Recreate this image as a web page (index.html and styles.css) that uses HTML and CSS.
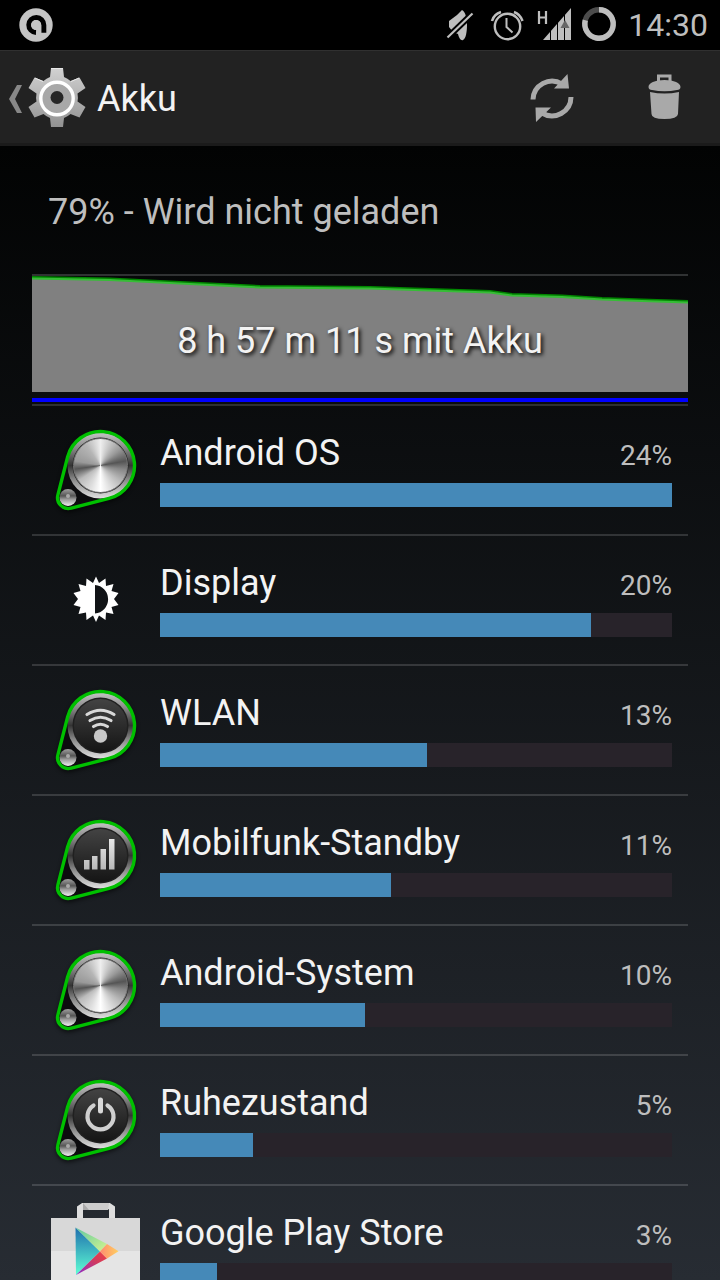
FILE: index.html
```
<!DOCTYPE html>
<html lang="de">
<head>
<meta charset="utf-8">
<meta name="viewport" content="width=device-width, initial-scale=1">
<title>Akku</title>
<link rel="stylesheet" href="styles.css">
</head>
<body>
<svg class="defs" width="0" height="0" aria-hidden="true">
  <defs>
    <linearGradient id="gear" x1="0" y1="0" x2="0" y2="1"><stop offset="0" stop-color="#d2d2d2"/><stop offset="1" stop-color="#929292"/></linearGradient>
    <linearGradient id="rim" x1="0" y1="0" x2="0" y2="1"><stop offset="0" stop-color="#c4c4c4"/><stop offset=".25" stop-color="#858585"/><stop offset=".5" stop-color="#343434"/><stop offset=".7" stop-color="#858585"/><stop offset="1" stop-color="#e0e0e0"/></linearGradient>
    <linearGradient id="face" x1="0" y1="0" x2="0" y2="1"><stop offset="0" stop-color="#434343"/><stop offset="1" stop-color="#151515"/></linearGradient>
    <linearGradient id="glyph" x1="0" y1="0" x2="0" y2="1"><stop offset="0" stop-color="#e8e8e8"/><stop offset="1" stop-color="#b8b8b8"/></linearGradient>
    <linearGradient id="ball" x1="0" y1="0" x2="0" y2="1"><stop offset="0" stop-color="#a0a0a0"/><stop offset=".4" stop-color="#555"/><stop offset=".6" stop-color="#999"/><stop offset="1" stop-color="#eee"/></linearGradient>
    <linearGradient id="play-blue" x1="0" y1="0" x2="0" y2="1"><stop offset="0" stop-color="#1f6fae"/><stop offset="1" stop-color="#5fffd4"/></linearGradient>
    <linearGradient id="play-green" x1="0" y1="0" x2="1" y2="1"><stop offset="0" stop-color="#5fc8a0"/><stop offset="1" stop-color="#d4f590"/></linearGradient>
    <linearGradient id="play-red" x1="0" y1="1" x2="1" y2="0"><stop offset="0" stop-color="#8a2bd0"/><stop offset=".6" stop-color="#d03a60"/><stop offset="1" stop-color="#f04040"/></linearGradient>
    <linearGradient id="play-orange" x1="0" y1="0" x2="1" y2="0"><stop offset="0" stop-color="#ff8a70"/><stop offset="1" stop-color="#ffd060"/></linearGradient>
    <filter id="soft" x="-20%" y="-20%" width="140%" height="140%"><feGaussianBlur stdDeviation="2"/></filter>
    <g id="knob">
      <path d="M27.6 42A34 34 0 1 1 69 83.4L31.3 93.2A11 11 0 0 1 17.9 79.8Z" fill="#000" stroke="#000" stroke-width="3" opacity=".6" transform="translate(0 2)" filter="url(#soft)"/>
      <path d="M27.6 42A34 34 0 1 1 69 83.4L31.3 93.2A11 11 0 0 1 17.9 79.8Z" fill="#0c0c0e"/>
      <circle cx="60.5" cy="50.5" r="33" fill="url(#rim)"/>
      <circle cx="60.5" cy="50.5" r="28" fill="#202020"/>
      <circle cx="60.5" cy="50.5" r="26.5" fill="url(#face)"/>
      <circle cx="28" cy="82.5" r="8.5" fill="url(#ball)"/>
      <circle cx="28" cy="81" r="2" fill="#aaa"/>
      <path d="M27.6 42A34 34 0 1 1 69 83.4L31.3 93.2A11 11 0 0 1 17.9 79.8Z" fill="none" stroke="#00c000" stroke-width="3.4"/>
    </g>
  </defs>
</svg>

<header class="status">
  <svg class="notice" viewBox="0 0 34 34" aria-hidden="true">
    <circle cx="17" cy="17" r="16.7" fill="#c4c4c4"/>
    <path d="M17 24.5A7.5 7.500 0 1 1 24.800 17V24.700" fill="none" stroke="#000" stroke-width="5"/>
    <circle cx="17" cy="17" r="5" fill="#c4c4c4"/>
    <path d="M19 17h3.200v8h-3.200z" fill="#c4c4c4"/>
  </svg>
  <svg class="signals" viewBox="446 0 172 50" aria-hidden="true">
    <g fill="#bebebe">
      <path d="M449 21L457 15L462 10C466 12 467 20 467 25C467 31 466 39 463 40C461 41 459 38 458 34L453 32L449 27Z"/>
      <path d="M447 38L473 13" stroke="#000" stroke-width="6"/>
      <path d="M447.500 37.500L472.500 13.500" stroke="#bebebe" stroke-width="2.200"/>
      <path d="M543 40L571 8V40Z"/>
    </g>
    <g fill="none" stroke="#bebebe">
      <circle cx="507.500" cy="26.500" r="12.700" stroke-width="2.400"/>
      <path d="M506.500 18V27L512.500 32.500" stroke-width="2"/>
      <path d="M492 21Q494 14 501 12M514 12Q520 14 522.500 21" stroke-width="2.600"/>
      <path d="M539 11V24M546 11V24M539 17.500H546" stroke-width="2.200"/>
      <circle cx="599" cy="24" r="14.200" stroke="#4c4c4c" stroke-width="5.400"/>
      <path d="M599 9.800A14.200 14.200 0 1 1 585.300 20.300" stroke-width="5.400"/>
    </g>
    <path d="M550.500 24V41M557.500 18V41M564.500 8V41" stroke="#000" stroke-width="1"/>
    <path d="M560.500 28L565 20L569.500 28Z" fill="#666"/>
  </svg>
  <time class="clock">14:30</time>
</header>

<nav class="bar">
  <a class="up" href="#">
    <svg class="logo" viewBox="0 0 90 88" aria-hidden="true">
      <path d="M17 30H22L15 44L22 58H17L9 44Z" fill="#888"/>
      <g transform="translate(57 42.500)">
        <path fill="url(#gear)" d="M-6-29.500H6L7-20.500A21.500 21.500 0 0 1 13.500-16.500L22.500-20L28.500-9.500L20.500-4A21.500 21.500 0 0 1 20.500 4L28.500 9.500L22.500 20L13.500 16.500A21.500 21.500 0 0 1 7 20.500L6 29.500H-6L-7 20.500A21.500 21.500 0 0 1 -13.500 16.500L-22.500 20L-28.500 9.500L-20.500 4A21.500 21.500 0 0 1 -20.500-4L-28.500-9.500L-22.500-20L-13.500-16.500A21.500 21.500 0 0 1 -7-20.500Z"/>
        <path d="M-6-29H6M-22-19.500L-14-16M22-19.500L14-16" stroke="#e8e8e8"/>
        <circle r="16.200" cy="1" fill="#a8a8a8" stroke="#fff" stroke-width="3.400"/>
        <circle r="6.500" fill="#262626"/>
      </g>
    </svg>
    <span class="title">Akku</span>
  </a>
  <button class="action" aria-label="Aktualisieren">
    <svg viewBox="0 0 48 52" aria-hidden="true">
      <path d="M5 26.500A19 19 0 0 1 34 11M43 24A19 19 0 0 1 14 40" fill="none" stroke="#a9a9a9" stroke-width="5"/>
      <path d="M39.500 1L41 15.500H26ZM8 49L7.500 34.500H23Z" fill="#a9a9a9"/>
    </svg>
  </button>
  <button class="action" aria-label="Löschen">
    <svg viewBox="0 0 48 52" aria-hidden="true">
      <path d="M18.500 9V3H30V9" fill="none" stroke="#a9a9a9" stroke-width="3"/>
      <path d="M8.500 14C8.500 10 15 7 24.500 7S40.500 10 40.500 14C40.500 16 39 17 37 17Q24.500 19.500 12 17C10 17 8.500 16 8.500 14ZM10 19Q24.500 22 39 19L38 41Q37.500 46 24.500 46T11.500 41Z" fill="#a9a9a9"/>
    </svg>
  </button>
</nav>

<main class="content">
  <h1 class="state">79% - Wird nicht geladen</h1>
  <a class="history" href="#">
    <svg class="graph" viewBox="0 0 656 116" preserveAspectRatio="none" aria-hidden="true">
      <path d="M0 2L78 3.500L158 7.500L228 11L338 12L398 14L458 16L480 19L530 20.500L570 23L610 24.500L656 26V116H0Z" fill="#808080"/>
      <path d="M0 1L78 2.500L158 6.500L228 10L338 11L398 13L458 15L480 18L530 19.500L570 22L610 23.500L656 25" fill="none" stroke="#008500" stroke-width="2"/>
      <path d="M0 2.500L78 4L158 8L228 11.500L338 12.500L398 14.500L458 16.500L480 19.500L530 21L570 23.500L610 25L656 26.500" fill="none" stroke="#36bd36" stroke-width="2"/>
    </svg>
    <span class="duration">8 h 57 m 11 s mit Akku</span>
    <span class="usage"></span>
  </a>
  <ul class="list">
    <li><a class="row" href="#">
      <svg class="icon" viewBox="-8 -9 128 128" aria-hidden="true"><use href="#knob"/><foreignObject x="33" y="23" width="55" height="55"><div class="metal"></div></foreignObject></svg>
      <span class="info"><span class="name">Android OS</span><span class="share">24%</span><span class="track"><span class="fill" style="width:100%"></span></span></span>
    </a></li>
    <li><a class="row" href="#">
      <svg class="icon" viewBox="-8 -9 128 128" aria-hidden="true">
        <path fill="#fff" fill-rule="evenodd" d="M56 31.500L59 38L65.500 33.500L66 41L73.500 39L71.500 46L78.500 48L74 54L78.500 60L71.500 62L73.500 69L66 67.500L65.500 75L59 70.500L56 77L53 70.500L46.500 75L46 67.500L38.500 69L40.500 62L33.500 60L38 54L33.500 48L40.500 46L38.500 39L46 41L46.500 33.500L53 38ZM55 40V68.500A14.300 14.300 0 0 0 55 40Z"/>
      </svg>
      <span class="info"><span class="name">Display</span><span class="share">20%</span><span class="track"><span class="fill" style="width:84.2%"></span></span></span>
    </a></li>
    <li><a class="row" href="#">
      <svg class="icon" viewBox="-8 -9 128 128" aria-hidden="true"><use href="#knob"/>
        <circle cx="60.500" cy="61" r="6.700" fill="#c8c8c8"/>
        <path d="M47 39.500Q60.500 31 74 39.500M50 45.500Q60.500 39 71 45.500M53.500 51.500Q60.500 47 67.500 51.500" fill="none" stroke="#d8d8d8" stroke-width="3.200" stroke-linecap="round"/>
      </svg>
      <span class="info"><span class="name">WLAN</span><span class="share">13%</span><span class="track"><span class="fill" style="width:52.1%"></span></span></span>
    </a></li>
    <li><a class="row" href="#">
      <svg class="icon" viewBox="-8 -9 128 128" aria-hidden="true"><use href="#knob"/>
        <path d="M44 55h5.500v9.500H44zM52 51h5.500v13.500H52zM60.500 44H66v20.500h-5.500zM69 34h5.500v30.500H69z" fill="url(#glyph)"/>
      </svg>
      <span class="info"><span class="name">Mobilfunk-Standby</span><span class="share">11%</span><span class="track"><span class="fill" style="width:45.1%"></span></span></span>
    </a></li>
    <li><a class="row" href="#">
      <svg class="icon" viewBox="-8 -9 128 128" aria-hidden="true"><use href="#knob"/><foreignObject x="33" y="23" width="55" height="55"><div class="metal"></div></foreignObject></svg>
      <span class="info"><span class="name">Android-System</span><span class="share">10%</span><span class="track"><span class="fill" style="width:40%"></span></span></span>
    </a></li>
    <li><a class="row" href="#">
      <svg class="icon" viewBox="-8 -9 128 128" aria-hidden="true"><use href="#knob"/>
        <path d="M53.500 40.500A13 13 0 1 0 67.500 40.500" fill="none" stroke="#cfcfcf" stroke-width="4.200" stroke-linecap="round"/>
        <path d="M60.500 35V46" stroke="#d8d8d8" stroke-width="5" stroke-linecap="round"/>
      </svg>
      <span class="info"><span class="name">Ruhezustand</span><span class="share">5%</span><span class="track"><span class="fill" style="width:18.2%"></span></span></span>
    </a></li>
    <li><a class="row" href="#">
      <svg class="icon" viewBox="0 0 128 128" aria-hidden="true">
        <path d="M48 34V22L51 20H77L80 22V34" fill="none" stroke="#dedede" stroke-width="6"/>
        <path d="M51 17H77L76 24H51Z" fill="#cdcdcd"/>
        <path d="M51 17V24H57Z" fill="#aaa"/>
        <path d="M19 32H108V65H19Z" fill="#d8d8d8"/>
        <path d="M19 65H108V108H19Z" fill="#e5e5e5"/>
        <path d="M43.500 41.500L68 65.500L44 89Z" fill="url(#play-blue)"/>
        <path d="M43.500 41.500L75 58L68 65.500Z" fill="url(#play-green)"/>
        <path d="M44 89L68 65.500L75 72.500Z" fill="url(#play-red)"/>
        <path d="M75 58L86.500 65.300L75 72.500L68 65.500Z" fill="url(#play-orange)"/>
      </svg>
      <span class="info"><span class="name">Google Play Store</span><span class="share">3%</span><span class="track"><span class="fill" style="width:11.1%"></span></span></span>
    </a></li>
  </ul>
</main>
</body>
</html>
```

FILE: styles.css
```
* { box-sizing: border-box; }

body {
  margin: 0;
  height: 100vh;
  display: flex;
  flex-direction: column;
  overflow: hidden;
  background: #000;
  color: #f3f3f3;
  font-family: Roboto, "Noto Sans", sans-serif;
  font-size: 36px;
  line-height: 42px;
}

a { color: inherit; text-decoration: none; }
svg { display: block; }
.defs { position: absolute; }

.status {
  flex: none;
  display: flex;
  align-items: center;
  height: 50px;
  padding: 0 12px 0 19px;
  background: #000;
}
.notice { width: 34px; height: 34px; margin-right: auto; }
.signals { width: 172px; height: 50px; }
.clock {
  margin-left: 10px;
  color: #bebebe;
  font-size: 32px;
}

.bar {
  flex: none;
  display: flex;
  align-items: center;
  height: 96px;
  padding-top: 4px;
  background: #222;
  border-top: 1px solid #303030;
  border-bottom: 3px solid #1b1b1b;
}
.up {
  display: flex;
  align-items: center;
  gap: 7px;
  margin-right: auto;
}
.logo { width: 90px; height: 88px; }
.action {
  display: flex;
  align-items: center;
  justify-content: center;
  width: 112px;
  height: 88px;
  padding: 0;
  border: 0;
  background: none;
}
.action svg { width: 48px; height: 52px; }

.content {
  flex: 1;
  min-height: 0;
  overflow: hidden;
  padding: 0 32px;
  background: linear-gradient(#020303, #272c33);
}
.state {
  margin: 0;
  padding: 45px 16px 41px;
  color: #bebebe;
  font-size: 36px;
  font-weight: 400;
}

.history {
  display: grid;
  height: 130px;
  grid-template-rows: 116px 1fr;
  border-top: 2px solid #303233;
}
.graph { grid-area: 1 / 1; width: 100%; height: 116px; }
.duration {
  grid-area: 1 / 1;
  place-self: center;
  padding-top: 14px;
  text-shadow: 2px 2px 4px #000;
}
.usage {
  grid-area: 2 / 1;
  height: 4px;
  margin-top: 6px;
  background: #00f;
}

.list { margin: 0; padding: 0; list-style: none; }
.row {
  display: flex;
  align-items: flex-start;
  border-top: 2px solid rgb(255 255 255 / 15%);
  padding-right: 16px;
}
.icon { flex: none; width: 128px; height: 128px; }
.metal {
  width: 55px;
  height: 55px;
  border: 1px solid #777;
  border-radius: 50%;
  background: conic-gradient(#eee 0deg, #ccc 20deg, #999 50deg, #555 80deg, #888 100deg, #bbb 130deg, #ddd 155deg, #fff 180deg, #ddd 205deg, #bbb 235deg, #555 262deg, #999 280deg, #b5b5b5 325deg, #eee 360deg);
}
.info {
  flex: 1;
  display: grid;
  grid-template-columns: 1fr auto;
  align-items: baseline;
  row-gap: 6px;
  padding-top: 26px;
}
.share { color: #bebebe; font-size: 28px; }
.track {
  grid-column: 1 / -1;
  height: 24px;
  background: #28232a;
}
.fill {
  display: block;
  height: 100%;
  background: #4589b8;
}
```
